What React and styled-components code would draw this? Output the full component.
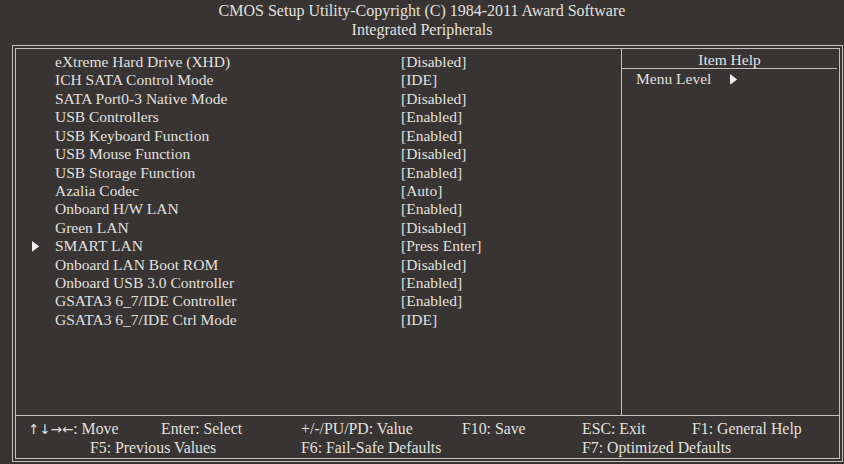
import React from 'react';
import styled, { createGlobalStyle } from 'styled-components';

const GlobalStyle = createGlobalStyle`
  html, body { margin: 0; padding: 0; background: #383433; }
  body { width: 844px; height: 464px; overflow: hidden; }
`;

const items = [
  ['eXtreme Hard Drive (XHD)', '[Disabled]'],
  ['ICH SATA Control Mode', '[IDE]'],
  ['SATA Port0-3 Native Mode', '[Disabled]'],
  ['USB Controllers', '[Enabled]'],
  ['USB Keyboard Function', '[Enabled]'],
  ['USB Mouse Function', '[Disabled]'],
  ['USB Storage Function', '[Enabled]'],
  ['Azalia Codec', '[Auto]'],
  ['Onboard H/W LAN', '[Enabled]'],
  ['Green LAN', '[Disabled]'],
  ['SMART LAN', '[Press Enter]', true],
  ['Onboard LAN Boot ROM', '[Disabled]'],
  ['Onboard USB 3.0 Controller', '[Enabled]'],
  ['GSATA3 6_7/IDE Controller', '[Enabled]'],
  ['GSATA3 6_7/IDE Ctrl Mode', '[IDE]'],
];

const keys = [
  { arrows: '↑↓→←', text: ': Move', col: 1 },
  { text: 'Enter: Select', col: 2 },
  { text: '+/-/PU/PD: Value', col: 3 },
  { text: 'F10: Save', col: 4 },
  { text: 'ESC: Exit', col: 5 },
  { text: 'F1: General Help', col: 6 },
  { text: 'F5: Previous Values', col: 1, indent: 62, span: 2 },
  { text: 'F6: Fail-Safe Defaults', col: 3, span: 2 },
  { text: 'F7: Optimized Defaults', col: 5, span: 2 },
];

const Screen = styled.div`
  width: 844px;
  height: 464px;
  display: flex;
  flex-direction: column;
  background: #383433;
  color: #e2e0df;
  font-family: "Liberation Serif", "Times New Roman", serif;
`;

const Header = styled.header`
  height: 45px;
  padding-top: 1px;
  box-sizing: border-box;
  text-align: center;
  font-size: 16px;
  line-height: 19px;
`;

const Frame = styled.div`
  flex: 1;
  margin: 0 1px 2px 12px;
  border: 1.5px solid #c4c2c1;
  padding: 2px;
  display: flex;
`;

const Inner = styled.div`
  flex: 1;
  border: 1.5px solid #c4c2c1;
  display: flex;
  flex-direction: column;
`;

const Body = styled.div`
  flex: 1;
  display: flex;
  border-bottom: 1.5px solid #c4c2c1;
`;

const List = styled.div`
  width: 605px;
  padding-top: 4px;
  border-right: 1.5px solid #c4c2c1;
`;

const Row = styled.div`
  display: flex;
  align-items: center;
  height: 18.43px;
  font-size: 15.5px;
  line-height: 18.43px;
`;

const Marker = styled.span`
  width: 39px;
  padding-left: 16px;
  box-sizing: border-box;
  display: flex;
  align-items: center;
`;

const Label = styled.span`
  width: 346px;
  white-space: nowrap;
`;

const Value = styled.span`
  white-space: nowrap;
`;

const Help = styled.aside`
  flex: 1;
  display: flex;
  flex-direction: column;
`;

const HelpTitle = styled.div`
  height: 20px;
  padding-top: 1px;
  box-sizing: border-box;
  margin-right: 2px;
  text-align: center;
  font-size: 15.5px;
  line-height: 19px;
  border-bottom: 1.5px solid #c4c2c1;
`;

const HelpText = styled.div`
  padding-left: 14px;
  font-size: 15.5px;
  line-height: 20px;
  display: flex;
  align-items: center;
  gap: 19px;
`;

const Footer = styled.footer`
  height: 42px;
  padding: 3px 0 0 12px;
  box-sizing: border-box;
  display: grid;
  grid-template-columns: 133px 140px 161px 120px 110px 1fr;
  grid-auto-rows: 19px;
  font-size: 15.8px;
  line-height: 19px;
  white-space: nowrap;
`;

const Key = styled.span`
  grid-column: ${p => p.$col} / span ${p => p.$span || 1};
  padding-left: ${p => p.$indent || 0}px;
`;

const Arrows = styled.span`
  font-family: "DejaVu Sans", sans-serif;
  font-size: 13.5px;
`;

const Arrow = ({ size = 9 }) => (
  <svg width={size * 0.8} height={size * 1.2} viewBox="0 0 8 12">
    <polygon points="0,0 8,6 0,12" fill="#f0eeee" />
  </svg>
);

export default function App() {
  return (
    <>
      <GlobalStyle />
      <Screen>
        <Header>
          <div>CMOS Setup Utility-Copyright (C) 1984-2011 Award Software</div>
          <div>Integrated Peripherals</div>
        </Header>
        <Frame>
          <Inner>
            <Body>
              <List>
                {items.map(([label, value, sub]) => (
                  <Row key={label}>
                    <Marker>{sub && <Arrow />}</Marker>
                    <Label>{label}</Label>
                    <Value>{value}</Value>
                  </Row>
                ))}
              </List>
              <Help>
                <HelpTitle>Item Help</HelpTitle>
                <HelpText>
                  <span>Menu Level</span>
                  <Arrow />
                </HelpText>
              </Help>
            </Body>
            <Footer>
              {keys.map(k => (
                <Key key={k.text} $col={k.col} $span={k.span} $indent={k.indent}>
                  {k.arrows && <Arrows>{k.arrows}</Arrows>}
                  {k.text}
                </Key>
              ))}
            </Footer>
          </Inner>
        </Frame>
      </Screen>
    </>
  );
}
